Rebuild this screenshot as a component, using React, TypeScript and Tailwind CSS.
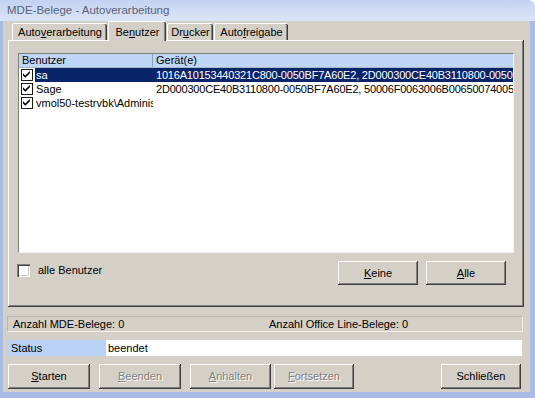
import type { ReactNode } from 'react';

const raised =
    'shadow-[inset_-1px_-1px_0_#404040,inset_1px_1px_0_#ffffff,inset_-2px_-2px_0_#808080]';

// Classic 3D push button
const Btn = ({ children, disabled, className = '' }: { children: ReactNode; disabled?: boolean; className?: string }) => (
    <div
        className={`flex items-center justify-center bg-[#d4d0c8] ${raised} ${
            disabled ? 'text-[#808080] [text-shadow:1px_1px_0_#ffffff]' : 'text-black'
        } ${className}`}
    >
        {children}
    </div>
);

const Check = () => (
    <svg width="8" height="8" viewBox="0 0 7 7" className="block">
        <path d="M0 2 L2 4 L6 0 L6 2 L2 6 L0 4 Z" fill="#000000" />
    </svg>
);

const ListCheck = () => (
    <div className="w-[12px] h-[12px] border border-[#1c1c1c] bg-white flex items-center justify-center shrink-0">
        <Check />
    </div>
);

const rows = [
    { user: 'sa', dev: '1016A10153440321C800-0050BF7A60E2, 2D000300CE40B3110800-0050BF7A60E2', selected: true },
    { user: 'Sage', dev: '2D000300CE40B3110800-0050BF7A60E2, 50006F0063006B00650074005C00', selected: false },
    { user: 'vmol50-testrvbk\\Administrator', dev: '', selected: false },
];

export default function App() {
    return (
        <div className="w-[535px] h-[398px] bg-[#a9bce5] rounded-tr-[8px] flex flex-col overflow-hidden font-['Liberation_Sans',Arial,sans-serif] text-[11px] text-black">
            {/* Title bar */}
            <div className="h-[21px] shrink-0 bg-gradient-to-b from-[#c3d2f0] via-[#d0dcf4] to-[#dbe5f8] pl-[7px] flex items-center text-[11.5px] text-[#56627a]">
                MDE-Belege - Autoverarbeitung
            </div>

            {/* Client area */}
            <div className="flex-1 ml-[3px] mr-[5px] mb-[6px] bg-[#d4d0c8] flex flex-col">
                {/* Tabs */}
                <div className="h-[19px] flex items-end pl-[9px] relative z-10">
                    <div className="w-[95px] h-[17px] rounded-t-[2px] border-t border-l border-white shadow-[inset_-1px_0_0_#404040,inset_-2px_0_0_#808080] flex items-center justify-center">
                        Auto<u>v</u>erarbeitung
                    </div>
                    <div className="w-[58px] h-[20px] ml-[1px] -mb-[1px] bg-[#d4d0c8] rounded-t-[2px] border-t border-l border-white shadow-[inset_-1px_0_0_#404040,inset_-2px_0_0_#808080] flex items-start justify-center pt-[2px]">
                        Be<u>n</u>utzer
                    </div>
                    <div className="w-[46px] h-[17px] ml-[1px] rounded-t-[2px] border-t border-l border-white shadow-[inset_-1px_0_0_#404040,inset_-2px_0_0_#808080] flex items-center justify-center">
                        Dr<u>u</u>cker
                    </div>
                    <div className="w-[74px] h-[17px] ml-[1px] rounded-t-[2px] border-t border-l border-white shadow-[inset_-1px_0_0_#404040,inset_-2px_0_0_#808080] flex items-center justify-center">
                        Auto<u>f</u>reigabe
                    </div>
                </div>

                {/* Tab panel */}
                <div className={`ml-[5px] w-[516px] h-[267px] shrink-0 ${raised} pl-[10px] pt-[13px]`}>
                    {/* List view */}
                    <div className="w-[496px] h-[200px] bg-white border border-t-[#808080] border-l-[#808080] border-r-[#f4f4f4] border-b-[#f4f4f4] overflow-hidden">
                        <div className="h-[14px] flex bg-[#c0d6f6] border-b border-[#aab8cc]">
                            <div className="w-[134px] pl-[3px] border-r border-[#8fa3c0] leading-[13px]">Benutzer</div>
                            <div className="pl-[3px] leading-[13px]">Gerät(e)</div>
                        </div>
                        {rows.map((r) => (
                            <div key={r.user} className="h-[14px] flex items-center">
                                <div className="w-[134px] flex items-center pl-[2px] shrink-0">
                                    <ListCheck />
                                    <div
                                        className={`ml-[2px] flex-1 h-[14px] leading-[14px] pl-[1px] whitespace-nowrap overflow-hidden ${
                                            r.selected ? 'bg-[#0a246a] text-white' : ''
                                        }`}
                                    >
                                        {r.user}
                                    </div>
                                </div>
                                <div
                                    className={`flex-1 h-[14px] leading-[14px] pl-[3px] tracking-[-0.2px] whitespace-nowrap overflow-hidden ${
                                        r.selected ? 'bg-[#0a246a] text-white' : ''
                                    }`}
                                >
                                    {r.dev}
                                </div>
                            </div>
                        ))}
                    </div>

                    {/* Checkbox + buttons */}
                    <div className="w-[496px] mt-[8px] flex items-start">
                        <div className="flex items-center mt-[1px] -ml-[1px]">
                            <div className="w-[13px] h-[13px] bg-white shadow-[inset_1px_1px_0_#808080,inset_2px_2px_0_#404040,inset_-1px_-1px_0_#ffffff,inset_-2px_-2px_0_#d4d0c8]" />
                            <span className="ml-[8px]">alle Benutzer</span>
                        </div>
                        <div className="ml-auto mr-[8px] flex gap-[8px]">
                            <Btn className="w-[80px] h-[24px]">
                                <u>K</u>eine
                            </Btn>
                            <Btn className="w-[80px] h-[24px]">
                                <u>A</u>lle
                            </Btn>
                        </div>
                    </div>
                </div>

                {/* Counters */}
                <div className="mt-[9px] ml-[4px] w-[516px] h-[16px] flex items-center border border-t-[#bdb9b1] border-l-[#bdb9b1] border-r-[#f2f1ee] border-b-[#f2f1ee]">
                    <span className="ml-[5px] w-[256px]">Anzahl MDE-Belege: 0</span>
                    <span>Anzahl Office Line-Belege: 0</span>
                </div>

                {/* Status */}
                <div className="mt-[8px] ml-[5px] w-[514px] h-[16px] flex">
                    <div className="w-[98px] bg-[#b9d1f5] pl-[3px] leading-[16px]">Status</div>
                    <div className="flex-1 bg-white pl-[2px] leading-[16px]">beendet</div>
                </div>

                {/* Bottom buttons */}
                <div className="mt-[8px] h-[25px] flex">
                    <Btn className="ml-[5px] w-[82px] h-[25px]">
                        <u>S</u>tarten
                    </Btn>
                    <Btn disabled className="ml-[9px] w-[82px] h-[25px]">
                        <u>B</u>eenden
                    </Btn>
                    <Btn disabled className="ml-[9px] w-[81px] h-[25px]">
                        <u>A</u>nhalten
                    </Btn>
                    <Btn disabled className="ml-[3px] w-[80px] h-[25px]">
                        <u>F</u>ortsetzen
                    </Btn>
                    <Btn className="ml-auto mr-[9px] w-[80px] h-[25px]">Schließen</Btn>
                </div>
            </div>
        </div>
    );
}
